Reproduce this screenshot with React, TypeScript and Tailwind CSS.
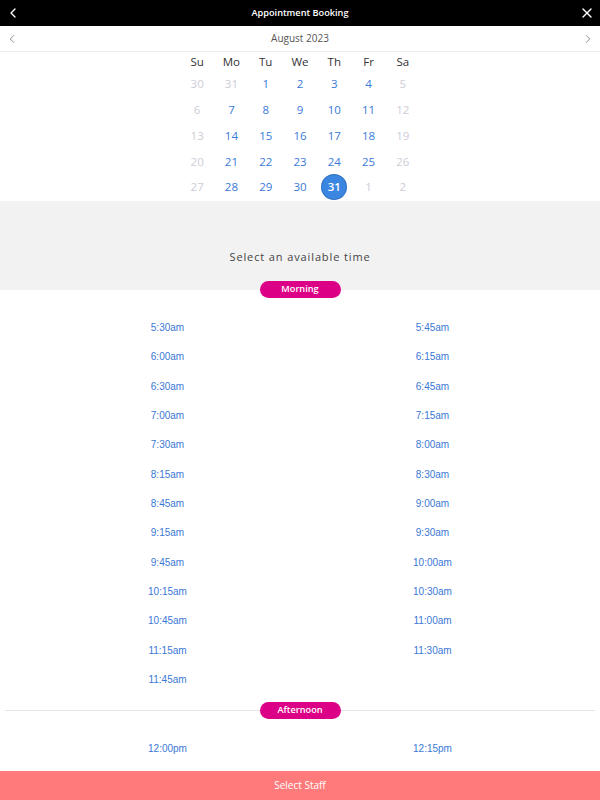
import { ChevronLeft, ChevronRight, X } from "lucide-react";

type Day = { n: number; muted?: boolean; selected?: boolean };

const weekDays = ["Su", "Mo", "Tu", "We", "Th", "Fr", "Sa"];

const weeks: Day[][] = [
  [{ n: 30, muted: true }, { n: 31, muted: true }, { n: 1 }, { n: 2 }, { n: 3 }, { n: 4 }, { n: 5, muted: true }],
  [{ n: 6, muted: true }, { n: 7 }, { n: 8 }, { n: 9 }, { n: 10 }, { n: 11 }, { n: 12, muted: true }],
  [{ n: 13, muted: true }, { n: 14 }, { n: 15 }, { n: 16 }, { n: 17 }, { n: 18 }, { n: 19, muted: true }],
  [{ n: 20, muted: true }, { n: 21 }, { n: 22 }, { n: 23 }, { n: 24 }, { n: 25 }, { n: 26, muted: true }],
  [{ n: 27, muted: true }, { n: 28 }, { n: 29 }, { n: 30 }, { n: 31, selected: true }, { n: 1, muted: true }, { n: 2, muted: true }],
];

const morning = [
  "5:30am", "5:45am", "6:00am", "6:15am", "6:30am", "6:45am", "7:00am", "7:15am",
  "7:30am", "8:00am", "8:15am", "8:30am", "8:45am", "9:00am", "9:15am", "9:30am",
  "9:45am", "10:00am", "10:15am", "10:30am", "10:45am", "11:00am", "11:15am", "11:30am",
  "11:45am",
];

// the rest of the afternoon sits under the footer bar
const afternoon = ["12:00pm", "12:15pm"];

function Pill({ label }: { label: string }) {
  return (
    <span className="relative z-10 flex h-[17px] w-[81px] items-center justify-center rounded-full bg-[#dc0087] text-[9.2px] font-semibold text-white">
      {label}
    </span>
  );
}

function TimeGrid({ times }: { times: string[] }) {
  return (
    <div className="grid grid-cols-2 px-[35px]">
      {times.map((t) => (
        <button
          key={t}
          className="flex h-[29.35px] items-center justify-center font-['Liberation_Sans',Arial,sans-serif] text-[10px] text-[#3a78d6]"
          type="button"
        >
          {t}
        </button>
      ))}
    </div>
  );
}

export default function App() {
  return (
    <main className="flex h-screen w-full flex-col overflow-hidden bg-white font-['Open_Sans',sans-serif]">
      <header className="flex h-[26px] shrink-0 items-center justify-between bg-black px-[5px] text-white">
        <ChevronLeft className="h-[16px] w-[16px]" strokeWidth={2} />
        <h1 className="text-[9.2px] font-semibold">Appointment Booking</h1>
        <X className="h-[16px] w-[16px]" strokeWidth={2} />
      </header>

      <div className="flex h-[26px] shrink-0 items-center justify-between border-b border-[#ebebeb] px-[5px] text-[#666]">
        <ChevronLeft className="h-[14px] w-[14px]" strokeWidth={1.25} />
        <span className="text-[10px] text-[#555]">August 2023</span>
        <ChevronRight className="h-[14px] w-[14px]" strokeWidth={1.25} />
      </div>

      <div className="flex-1 overflow-hidden">
        <section className="mx-auto w-[240px]">
          <div className="grid h-[19px] grid-cols-7 text-[11.5px] text-[#333]">
            {weekDays.map((d) => (
              <span key={d} className="flex items-center justify-center">
                {d}
              </span>
            ))}
          </div>
          {weeks.map((week, i) => (
            <div key={i} className="grid h-[25.75px] grid-cols-7 text-[11.5px]">
              {week.map((day, j) => (
                <span key={j} className="flex items-center justify-center">
                  {day.selected ? (
                    <span className="flex h-[24px] w-[24px] items-center justify-center rounded-full bg-[#3a86e0] font-semibold text-white ring-1 ring-[#2f6fc0]">
                      {day.n}
                    </span>
                  ) : (
                    <span className={day.muted ? "text-[#cdcdd6]" : "text-[#3a7ad8]"}>{day.n}</span>
                  )}
                </span>
              ))}
            </div>
          ))}
        </section>

        <div className="mt-px flex h-[89px] items-end justify-center bg-[#f2f2f2] pb-[24px]">
          <p className="text-[11px] tracking-[0.08em] text-[#444]">Select an available time</p>
        </div>
        <div className="-mt-[9px] flex justify-center">
          <Pill label="Morning" />
        </div>

        <div className="pt-[15px]">
          <TimeGrid times={morning} />
        </div>

        <div className="relative mx-[5px] mt-[6px] flex h-[20px] items-center justify-center">
          <div className="absolute inset-x-0 top-1/2 h-px bg-[#e3e5ea]" />
          <Pill label="Afternoon" />
        </div>

        <div className="pt-[14px]">
          <TimeGrid times={afternoon} />
        </div>
      </div>

      <button
        className="flex h-[29px] shrink-0 items-center justify-center bg-[#ff7b7b] text-[10px] text-white"
        type="button"
      >
        Select Staff
      </button>
    </main>
  );
}
